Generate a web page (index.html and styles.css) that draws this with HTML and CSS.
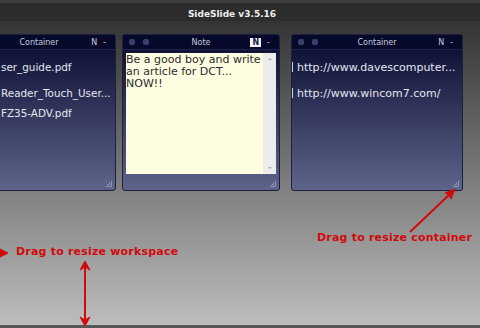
FILE: index.html
```html
<!DOCTYPE html>
<html lang="en">
<head>
    <meta charset="UTF-8">
    <title>SideSlide</title>
    <link rel="stylesheet" href="styles.css">
</head>
<body>
    <div class="window">
        <div class="titlebar">SideSlide v3.5.16</div>

        <div class="workspace">
            <div class="box box-left">
                <div class="box-head">
                    <span class="dots"><i></i><i></i></span>
                    <span class="box-title">Container</span>
                    <span class="box-ctrl"><b>N</b><b>-</b></span>
                </div>
                <ul class="items">
                    <li>ser_guide.pdf</li>
                    <li>Reader_Touch_User...</li>
                    <li class="tight">FZ35-ADV.pdf</li>
                </ul>
                <svg class="grip" width="6" height="6" viewBox="0 0 6 6"><path d="M5.5 0v5.5H0M3.5 1.5v2h-2" fill="none" stroke="#9096bd" stroke-width="1"/></svg>
            </div>

            <div class="box box-note">
                <div class="box-head">
                    <span class="dots"><i></i><i></i></span>
                    <span class="box-title">Note</span>
                    <span class="box-ctrl"><b class="on">N</b><b>-</b></span>
                </div>
                <div class="note-body">
                    <div class="note-text">Be a good boy and write an article for DCT...<br>NOW!!</div>
                    <div class="scrollbar">
                        <span class="arrow up"></span>
                        <span class="arrow down"></span>
                    </div>
                </div>
                <div class="note-foot"></div>
                <svg class="grip" width="6" height="6" viewBox="0 0 6 6"><path d="M5.5 0v5.5H0M3.5 1.5v2h-2" fill="none" stroke="#9096bd" stroke-width="1"/></svg>
            </div>

            <div class="box box-right">
                <div class="box-head">
                    <span class="dots"><i></i><i></i></span>
                    <span class="box-title">Container</span>
                    <span class="box-ctrl"><b>N</b><b>-</b></span>
                </div>
                <ul class="items">
                    <li><span class="mark"></span>http://www.davescomputer...</li>
                    <li><span class="mark"></span>http://www.wincom7.com/</li>
                </ul>
                <svg class="grip" width="6" height="6" viewBox="0 0 6 6"><path d="M5.5 0v5.5H0M3.5 1.5v2h-2" fill="none" stroke="#9096bd" stroke-width="1"/></svg>
            </div>
        </div>

        <div class="statusbar"></div>

        <!-- red help notes drawn over the window -->
        <svg class="arrows" width="480" height="328" viewBox="0 0 480 328">
            <g fill="#d10a0a" stroke="#d10a0a">
                <line x1="410" y1="232" x2="450" y2="194" stroke-width="2"/>
                <polygon points="455,189 445,193 449,195 451,199" stroke-width="1"/>
                <polygon points="8,253 0,249 0,257" stroke-width="1"/>
                <line x1="85" y1="266" x2="85" y2="322" stroke-width="2"/>
                <polygon points="85,261 80,270 85,267 90,270" stroke-width="1"/>
                <polygon points="85,326 80,317 85,320 90,317" stroke-width="1"/>
            </g>
        </svg>
        <div class="hint hint-workspace">Drag to resize workspace</div>
        <div class="hint hint-container">Drag to resize container</div>
    </div>
</body>
</html>
```

FILE: styles.css
```css
body {
    margin: 0;
    font-family: "DejaVu Sans", Verdana, sans-serif;
}
.window {
    position: relative;
    width: 480px;
    height: 328px;
    overflow: hidden;
    display: flex;
    flex-direction: column;
}
.titlebar {
    border-top: 3px solid #3e3e3e;
    background: #2c2c2c;
    height: 13px;
    padding: 5px 16px 0 0;
    line-height: 13px;
    text-align: center;
    color: #eeeeee;
    font-size: 9px;
    font-weight: bold;
}
.workspace {
    flex: 1;
    display: flex;
    align-items: flex-start;
    padding-top: 13px;
    background: linear-gradient(#343434, #bdbdbd);
}
.statusbar {
    height: 3px;
    background: #575757;
}

/* containers */
.box {
    position: relative;
    flex: none;
    height: 155px;
    display: flex;
    flex-direction: column;
    border: 1px solid #1c1f3e;
    border-radius: 3px;
    background: linear-gradient(#070a2d, #5e648a);
}
.box-left {
    width: 152px;
    margin-left: -38px;
}
.box-note {
    width: 156px;
    margin-left: 6px;
}
.box-right {
    width: 170px;
    margin-left: 11px;
}
.box-head {
    height: 14px;
    display: grid;
    grid-template-columns: 1fr auto 1fr;
    align-items: center;
    padding: 0 6px;
    border-bottom: 1px solid #20244c;
    background: #060929;
    border-radius: 2px 2px 0 0;
    font-size: 8px;
    color: #c8cadf;
}
.dots {
    display: flex;
    gap: 8px;
}
.dots i {
    width: 6px;
    height: 6px;
    border-radius: 2px;
    background: #3b3f6c;
}
.box-ctrl {
    justify-self: end;
    display: flex;
    align-items: center;
    gap: 6px;
    padding-right: 3px;
}
.box-ctrl b {
    font-weight: normal;
}
.box-ctrl .on {
    background: #f4f4f4;
    color: #1a1d48;
    padding: 0 2px;
    line-height: 9px;
    font-weight: bold;
}

.items {
    list-style: none;
    margin: 0;
    padding: 11px 0 0 0;
    font-size: 11px;
    line-height: 13px;
    color: #e4e6f2;
    white-space: nowrap;
    overflow: hidden;
}
.items li + li {
    margin-top: 13px;
}
.items li.tight {
    margin-top: 7px;
}
.box-left .items {
    padding-left: 38px;
    font-size: 10.4px;
}
.mark {
    display: inline-block;
    width: 1px;
    height: 10px;
    margin-right: 4px;
    vertical-align: -1px;
    background: #cfd1e4;
}

/* note */
.note-body {
    display: flex;
    height: 121px;
    padding: 3px 3px 0;
}
.note-text {
    flex: 1;
    background: #fffde1;
    color: #2b2b2b;
    font-size: 11px;
    line-height: 12px;
    padding-top: 1px;
}
.scrollbar {
    position: relative;
    width: 13px;
    background: #ececec;
}
.arrow {
    position: absolute;
    left: 5px;
    width: 0;
    height: 0;
    border-left: 2px solid transparent;
    border-right: 2px solid transparent;
}
.arrow.up {
    top: 5px;
    border-bottom: 2px solid #a9a9a9;
}
.arrow.down {
    bottom: 5px;
    border-top: 2px solid #a9a9a9;
}
.grip {
    position: absolute;
    right: 3px;
    bottom: 3px;
}

/* red help notes */
.arrows {
    position: absolute;
    left: 0;
    top: 0;
    pointer-events: none;
}
.hint {
    position: absolute;
    color: #d10a0a;
    font-size: 11px;
    font-weight: bold;
    line-height: 14px;
    letter-spacing: 0.2px;
    white-space: nowrap;
}
.hint-workspace {
    left: 16px;
    top: 245px;
}
.hint-container {
    left: 317px;
    top: 231px;
}
```
